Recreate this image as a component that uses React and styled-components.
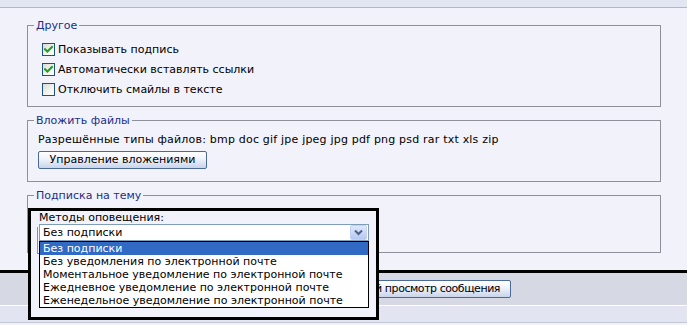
import React from 'react';
import styled, { createGlobalStyle } from 'styled-components';

const Global = createGlobalStyle`
  html, body { margin: 0; padding: 0; }
  body { background: #f1f2fa; }
`;

const Page = styled.div`
  position: relative;
  width: 687px;
  height: 325px;
  overflow: hidden;
  display: flex;
  flex-direction: column;
  font-family: "DejaVu Sans", Verdana, sans-serif;
  font-size: 11px;
  color: #000;
`;

const TopStrip = styled.div`
  flex: none;
  height: 7px;
  background: #e2e5f2;
  border-bottom: 1px solid #b4b7c3;
`;

const Panel = styled.div`
  flex: none;
  background: #f1f2fa;
  padding: 11px 26px 17px 27px;
  display: flex;
  flex-direction: column;
  gap: 7px;
`;

const Group = styled.fieldset`
  margin: 0;
  min-width: 0;
  border: 1px solid #8f9099;
  padding: ${p => p.$pad};
  height: ${p => p.$h || 'auto'};
  box-sizing: border-box;
`;

const Legend = styled.legend`
  margin-left: -4px;
  padding: 0 2px;
  color: #1b2f8a;
  font-size: 11px;
  line-height: 13px;
`;

const CheckRow = styled.label`
  display: flex;
  align-items: center;
  gap: 3px;
  height: 20px;
  padding-left: 4px;
  line-height: 13px;
`;

const Box = styled.span`
  width: 11px;
  height: 11px;
  border: 1px solid #1c5180;
  background: linear-gradient(135deg, #dcdcd5 0%, #f4f4f0 60%, #ffffff 100%);
  display: inline-flex;
  align-items: center;
  justify-content: center;
  flex: none;
`;

const TextLine = styled.div`
  line-height: 13px;
  letter-spacing: 0.2px;
`;

const XPButton = styled.button`
  font-family: "DejaVu Sans", Verdana, sans-serif;
  font-size: 11px;
  color: #000;
  height: 18px;
  padding: 0 10px;
  border: 1px solid #4b6a98;
  border-radius: 2px;
  background: linear-gradient(#ffffff 0%, #eef2fb 45%, #c9d4ea 100%);
  line-height: 14px;
  letter-spacing: ${p => p.$ls || '0'};
  width: ${p => p.$w || 'auto'};
  cursor: pointer;
`;

const ButtonWrap = styled.div`
  margin-top: 5px;
`;

const FooterBar = styled.div`
  flex: none;
  height: 32px;
  border-top: 3px solid #000;
  background: #d6d8e4;
  border-bottom: 1px solid #ffffff;
  display: flex;
  align-items: center;
  justify-content: flex-end;
  padding-right: 176px;
`;

const FooterStrip = styled.div`
  flex: none;
  height: 16px;
  background: #e2e4f1;
  border-bottom: 1px solid #c3c6d3;
`;

/* pasted annotation: open drop-down framed in black */
const Callout = styled.div`
  position: absolute;
  left: 28px;
  top: 208px;
  width: 345px;
  height: 106px;
  border: 3px solid #000;
  background: #f1f2fa;
  z-index: 5;
`;

const GhostBorder = styled.div`
  position: absolute;
  left: 6px;
  top: 16px;
  width: 4px;
  height: 26px;
  border-left: 1px solid #8f9099;
  border-bottom: 1px solid #8f9099;
`;

const CalloutLabel = styled.div`
  padding-left: 8px;
  line-height: 13px;
`;

const SelectBox = styled.div`
  position: relative;
  margin-left: 8px;
  height: 15px;
  width: 325px;
  border: 1px solid #7f9db9;
  background: #fff;
  display: flex;
  align-items: center;
  justify-content: space-between;
  padding-left: 3px;
`;

const SelectValue = styled.span`
  line-height: 13px;
`;

const ArrowBtn = styled.span`
  width: 15px;
  height: 13px;
  margin-right: 1px;
  border: 1px solid #c3d1f5;
  border-radius: 2px;
  background: linear-gradient(#dfe8fd, #b7c8f1);
  display: inline-flex;
  align-items: center;
  justify-content: center;
`;

const OptionList = styled.ul`
  position: relative;
  list-style: none;
  margin: 0 0 0 8px;
  padding: 0;
  width: 328px;
  border: 1px solid #000;
  background: #fff;
`;

const Option = styled.li`
  height: 13px;
  line-height: 13px;
  padding-left: 3px;
  white-space: nowrap;
  background: ${p => (p.$active ? '#316ac5' : '#fff')};
  color: ${p => (p.$active ? '#fff' : '#000')};
`;

const Check = () => (
  <svg width="9" height="9" viewBox="0 0 9 9">
    <path d="M1 4.2 L3.4 6.6 L8 2" fill="none" stroke="#21a121" strokeWidth="2.1" strokeLinecap="square" />
  </svg>
);

const Checkbox = ({ checked, children }) => (
  <CheckRow>
    <Box>{checked && <Check />}</Box>
    {children}
  </CheckRow>
);

const options = [
  'Без подписки',
  'Без уведомления по электронной почте',
  'Моментальное уведомление по электронной почте',
  'Ежедневное уведомление по электронной почте',
  'Еженедельное уведомление по электронной почте',
];

export default function App() {
  return (
    <Page>
      <Global />
      <TopStrip />
      <Panel>
        <Group $pad="7px 10px 7px 10px">
          <Legend>Другое</Legend>
          <Checkbox checked>Показывать подпись</Checkbox>
          <Checkbox checked>Автоматически вставлять ссылки</Checkbox>
          <Checkbox>Отключить смайлы в тексте</Checkbox>
        </Group>
        <Group $pad="6px 10px 12px 10px">
          <Legend>Вложить файлы</Legend>
          <TextLine>Разрешённые типы файлов: bmp doc gif jpe jpeg jpg pdf png psd rar txt xls zip</TextLine>
          <ButtonWrap>
            <XPButton $w="169px">Управление вложениями</XPButton>
          </ButtonWrap>
        </Group>
        <Group $pad="0 10px" $h="64px">
          <Legend>Подписка на тему</Legend>
        </Group>
      </Panel>
      <FooterBar>
        <XPButton $ls="-0.45px">Предварительный просмотр сообщения</XPButton>
      </FooterBar>
      <FooterStrip />
      <Callout>
        <GhostBorder />
        <CalloutLabel>Методы оповещения:</CalloutLabel>
        <SelectBox>
          <SelectValue>Без подписки</SelectValue>
          <ArrowBtn>
            <svg width="9" height="7" viewBox="0 0 9 7">
              <path d="M1 1.5 L4.5 5 L8 1.5" fill="none" stroke="#4d6185" strokeWidth="2" />
            </svg>
          </ArrowBtn>
        </SelectBox>
        <OptionList>
          {options.map((o, i) => (
            <Option key={o} $active={i === 0}>{o}</Option>
          ))}
        </OptionList>
      </Callout>
    </Page>
  );
}
